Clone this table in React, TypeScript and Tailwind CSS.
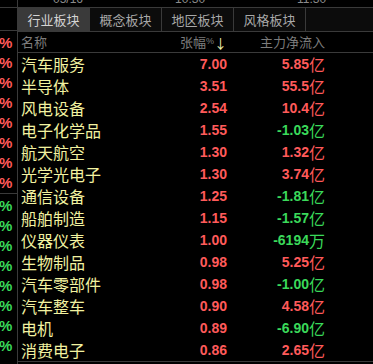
import React from "react";

const rows: { name: string; pct: string; val: string; unit: string; up: boolean }[] = [
  { name: "汽车服务", pct: "7.00", val: "5.85", unit: "亿", up: true },
  { name: "半导体", pct: "3.51", val: "55.5", unit: "亿", up: true },
  { name: "风电设备", pct: "2.54", val: "10.4", unit: "亿", up: true },
  { name: "电子化学品", pct: "1.55", val: "-1.03", unit: "亿", up: false },
  { name: "航天航空", pct: "1.30", val: "1.32", unit: "亿", up: true },
  { name: "光学光电子", pct: "1.30", val: "3.74", unit: "亿", up: true },
  { name: "通信设备", pct: "1.25", val: "-1.81", unit: "亿", up: false },
  { name: "船舶制造", pct: "1.15", val: "-1.57", unit: "亿", up: false },
  { name: "仪器仪表", pct: "1.00", val: "-6194", unit: "万", up: false },
  { name: "生物制品", pct: "0.98", val: "5.25", unit: "亿", up: true },
  { name: "汽车零部件", pct: "0.98", val: "-1.00", unit: "亿", up: false },
  { name: "汽车整车", pct: "0.90", val: "4.58", unit: "亿", up: true },
  { name: "电机", pct: "0.89", val: "-6.90", unit: "亿", up: false },
  { name: "消费电子", pct: "0.86", val: "2.65", unit: "亿", up: true },
];

const tabs = ["行业板块", "概念板块", "地区板块", "风格板块"];

const cjk = { fontFamily: '"Noto Sans CJK SC", "Noto Sans", sans-serif' };
const num = { fontFamily: '"Liberation Sans", Arial, sans-serif' };

function TimeLabel({ text, className }: { text: string; className: string }) {
  return (
    <span className={"inline-block h-[7px] overflow-hidden " + className}>
      <span className="block -mt-[7px] text-[12px] leading-[12px]">{text}</span>
    </span>
  );
}

export default function App() {
  return (
    <div className="w-[373px] h-[364px] bg-[#000000] flex flex-col overflow-hidden select-none" style={cjk}>
      {/* top strip */}
      <div className="h-[7px] flex overflow-hidden shrink-0">
        <div className="w-[18px] border-r border-[#3a3a3a] shrink-0" />
        <div className="flex-1 flex items-start h-[7px] overflow-hidden text-[#8a8a8a]" style={num}>
          <TimeLabel text="05/16" className="ml-[35px]" />
          <TimeLabel text="10:30" className="ml-[92px]" />
          <TimeLabel text="11:30" className="ml-[92px]" />
        </div>
      </div>
      <div className="h-px bg-[#3a3a3a] shrink-0" />
      <div className="flex flex-1 min-h-0">
        {/* left strip */}
        <div className="w-[18px] shrink-0 border-r border-[#3a3a3a] flex flex-col">
          <div className="h-[23px] border-b border-[#3a3a3a] shrink-0" />
          <div className="pt-[2px] flex flex-col">
            {Array.from({ length: 8 }).map((_, i) => (
              <div key={"r" + i} className="h-[20px] flex items-center text-[15px] font-bold text-[#ff5a5a]" style={num}>
                <span className="-ml-[1px]">%</span>
              </div>
            ))}
          </div>
          <div className="h-px bg-[#3a3a3a]" />
          <div className="pt-[2px] flex flex-col">
            {Array.from({ length: 8 }).map((_, i) => (
              <div key={"g" + i} className="h-[20px] flex items-center text-[15px] font-bold text-[#3ad95a]" style={num}>
                <span className="-ml-[1px]">%</span>
              </div>
            ))}
          </div>
        </div>
        {/* main */}
        <div className="flex-1 flex flex-col min-w-0">
          <div className="h-[24px] flex border-b border-[#3a3a3a] shrink-0">
            {tabs.map((t, i) => (
              <div
                key={t}
                className={
                  "w-[72px] h-full flex items-center justify-center border-r border-[#3a3a3a] text-[13px] " +
                  (i === 0 ? "bg-[#3a3a3a] text-[#d4d4d4]" : "bg-[#0c0c0c] text-[#a8a8a8]")
                }
              >
                {t}
              </div>
            ))}
            <div className="flex-1 bg-[#0c0c0c]" />
          </div>
          <div className="h-[21px] grid grid-cols-[152px_57px_98px_1fr] items-center border-b border-[#3a3a3a] text-[13px] text-[#7c7c7c] shrink-0">
            <div className="pl-[3px]">名称</div>
            <div className="flex items-center justify-end">
              <span>张幅</span>
              <span className="text-[9px]" style={num}>%</span>
              <span className="text-[#f4f4b0] text-[13px] leading-none">↓</span>
            </div>
            <div className="text-right">主力净流入</div>
            <div />
          </div>
          <div className="flex flex-col">
            {rows.map((r) => (
              <div key={r.name} className="h-[22px] grid grid-cols-[152px_57px_98px_1fr] items-center">
                <div className="pl-[3px] text-[16px] leading-none text-[#f2f2a0] whitespace-nowrap">{r.name}</div>
                <div className="text-right text-[14px] font-bold text-[#ff5a5a] leading-none" style={num}>
                  {r.pct}
                </div>
                <div className={"flex items-center justify-end leading-none " + (r.up ? "text-[#ff5a5a]" : "text-[#3ad95a]")}>
                  <span className="text-[14px] font-bold" style={num}>{r.val}</span>
                  <span className="text-[16px]">{r.unit}</span>
                </div>
                <div />
              </div>
            ))}
          </div>
          <div className="h-px bg-[#3a3a3a]" />
        </div>
      </div>
    </div>
  );
}
